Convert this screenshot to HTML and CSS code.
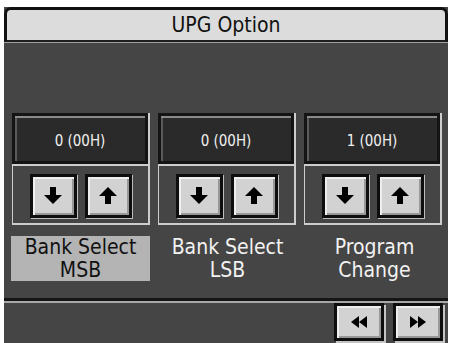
FILE: index.html
```
<!DOCTYPE html>
<html>
<head>
<meta charset="utf-8">
<link rel="stylesheet" href="styles.css">
</head>
<body>
<div class="screen">
  <div class="title">UPG Option</div>
  <div class="main">
    <div class="panels">
      <div class="panel">
        <div class="disp">0 (00H)</div>
        <div class="ctrl">
          <div class="btn"><svg width="18" height="17" viewBox="0 0 18 17"><rect x="6" y="0" width="6" height="8.5" fill="#000"/><polygon points="0,8 18,8 9,17" fill="#000"/></svg></div>
          <div class="btn"><svg width="18" height="17" viewBox="0 0 18 17"><rect x="6" y="8.5" width="6" height="8.5" fill="#000"/><polygon points="0,9 18,9 9,0" fill="#000"/></svg></div>
        </div>
      </div>
      <div class="panel">
        <div class="disp">0 (00H)</div>
        <div class="ctrl">
          <div class="btn"><svg width="18" height="17" viewBox="0 0 18 17"><rect x="6" y="0" width="6" height="8.5" fill="#000"/><polygon points="0,8 18,8 9,17" fill="#000"/></svg></div>
          <div class="btn"><svg width="18" height="17" viewBox="0 0 18 17"><rect x="6" y="8.5" width="6" height="8.5" fill="#000"/><polygon points="0,9 18,9 9,0" fill="#000"/></svg></div>
        </div>
      </div>
      <div class="panel">
        <div class="disp">1 (00H)</div>
        <div class="ctrl">
          <div class="btn"><svg width="18" height="17" viewBox="0 0 18 17"><rect x="6" y="0" width="6" height="8.5" fill="#000"/><polygon points="0,8 18,8 9,17" fill="#000"/></svg></div>
          <div class="btn"><svg width="18" height="17" viewBox="0 0 18 17"><rect x="6" y="8.5" width="6" height="8.5" fill="#000"/><polygon points="0,9 18,9 9,0" fill="#000"/></svg></div>
        </div>
      </div>
    </div>
    <div class="labels">
      <div class="label sel">Bank Select<br>MSB</div>
      <div class="label">Bank Select<br>LSB</div>
      <div class="label">Program<br>Change</div>
    </div>
  </div>
  <div class="bar">
    <div class="nbtn"><svg width="16" height="12" viewBox="0 0 16 12"><polygon points="8,0 0,6 8,12" fill="#000"/><polygon points="16,0 8,6 16,12" fill="#000"/></svg></div>
    <div class="nbtn"><svg width="16" height="12" viewBox="0 0 16 12"><polygon points="0,0 8,6 0,12" fill="#000"/><polygon points="8,0 16,6 8,12" fill="#000"/></svg></div>
  </div>
</div>
</body>
</html>
```
FILE: styles.css
```
html, body {
  margin: 0;
  padding: 0;
  background: #ffffff;
}
body {
  width: 450px;
  height: 343px;
  overflow: hidden;
  font-family: "DejaVu Sans Condensed", "DejaVu Sans", sans-serif;
}
.screen {
  margin: 7px 0 0 4px;
  width: 444px;
  height: 340px;
  background: #454545;
  display: flex;
  flex-direction: column;
}
.title {
  box-sizing: border-box;
  height: 35px;
  background: #dcdcdc;
  border: 3px solid #111;
  border-bottom: 2px solid #1e1e1e;
  border-radius: 7px 7px 0 0;
  box-shadow: 0 1px 0 #a0a0a0;
  color: #111;
  font-size: 21px;
  line-height: 31px;
  text-align: center;
}
.main {
  padding: 71px 0 0 8px;
}
.panels {
  display: flex;
  gap: 8px;
}
.panel {
  width: 136px;
  display: flex;
  flex-direction: column;
  border-right: 2px solid #cdcdcd;
}
.disp {
  box-sizing: border-box;
  height: 51px;
  background: #2a2a2a;
  border: 3px solid #141414;
  box-shadow: inset 0 2px 0 #8a8a8a, inset 2px 0 0 #5a5a5a;
  color: #f0f0f0;
  font-family: "DejaVu Sans Condensed", "DejaVu Sans", sans-serif;
  font-size: 15px;
  line-height: 50px;
  text-align: center;
}
.ctrl {
  box-sizing: border-box;
  height: 61px;
  border-left: 1px solid #cdcdcd;
  border-top: 2px solid #cdcdcd;
  border-bottom: 2px solid #cdcdcd;
  display: flex;
  justify-content: center;
  align-items: center;
  gap: 8px;
  padding-top: 2px;
}
.btn {
  box-sizing: border-box;
  width: 47px;
  height: 44px;
  background: #d2d2d2;
  border: 3px solid #0e0e0e;
  box-shadow: inset 2px 2px 0 #eeeeee, inset -2px -2px 0 #989898, 1px 1px 0 #bdbdbd;
  display: flex;
  justify-content: center;
  align-items: center;
}
.labels {
  display: flex;
  gap: 8px;
  margin-top: 11px;
  margin-left: -1px;
}
.label {
  width: 139px;
  height: 45px;
  color: #f2f2f2;
  font-size: 21px;
  line-height: 23px;
  text-align: center;
}
.label.sel {
  background: #b4b4b4;
  color: #111;
}
.bar {
  margin-top: 17px;
  flex: 1;
  border-top: 3px solid #151515;
  box-shadow: inset 0 2px 0 #a8a8a8;
  display: flex;
  justify-content: flex-end;
  gap: 9px;
  padding: 2px 5px 0 0;
}
.nbtn {
  box-sizing: border-box;
  width: 50px;
  height: 38px;
  background: #d2d2d2;
  border: 3px solid #0e0e0e;
  box-shadow: inset 2px 2px 0 #eeeeee, inset -2px -2px 0 #989898, 2px 2px 0 #c4c4c4;
  display: flex;
  justify-content: center;
  align-items: center;
}
```
